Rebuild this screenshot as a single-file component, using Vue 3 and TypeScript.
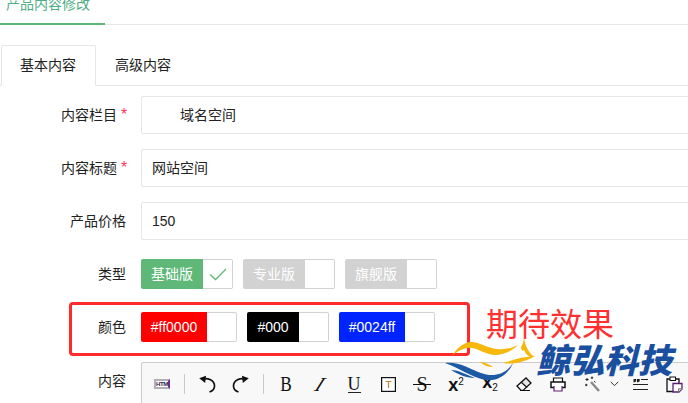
<script setup lang="ts">
interface Chip { label: string; cls?: string; style?: string; width: number; check?: boolean }
const types: Chip[] = [
  { label: '基础版', cls: 'on', width: 62, check: true },
  { label: '专业版', cls: 'off', width: 62 },
  { label: '旗舰版', cls: 'off', width: 62 },
]
const colors: Chip[] = [
  { label: '#ff0000', style: '#ff0000', width: 66 },
  { label: '#000', style: '#000000', width: 52 },
  { label: '#0024ff', style: '#0024ff', width: 66 },
]
</script>

<template>
  <div class="page">
    <nav class="topnav"><div class="toptab">产品内容修改</div></nav>

    <div class="tabs">
      <div class="tab active">基本内容</div>
      <div class="tab">高级内容</div>
    </div>

    <form class="form">
      <div class="row">
        <label class="label req">内容栏目<i class="star">*</i></label>
        <div class="input select">域名空间</div>
      </div>
      <div class="row">
        <label class="label req">内容标题<i class="star">*</i></label>
        <div class="input">网站空间</div>
      </div>
      <div class="row">
        <label class="label">产品价格</label>
        <div class="input">150</div>
      </div>
      <div class="row chips-row type-row">
        <label class="label">类型</label>
        <div class="chips">
          <div v-for="c in types" :key="c.label" class="chip">
            <span class="chip-text" :class="c.cls" :style="{ width: c.width + 'px' }">{{ c.label }}</span>
            <span class="chip-box">
              <svg v-if="c.check" width="20" height="14" viewBox="0 0 20 14"><path d="M2 7.5 L7.5 12.5 L18 2" fill="none" stroke="#5fb878" stroke-width="1.3"/></svg>
            </span>
          </div>
        </div>
      </div>
      <div class="row chips-row color-row">
        <label class="label">颜色</label>
        <div class="chips">
          <div v-for="c in colors" :key="c.label" class="chip">
            <span class="chip-text" :style="{ width: c.width + 'px', background: c.style }">{{ c.label }}</span>
            <span class="chip-box"></span>
          </div>
        </div>
      </div>
      <div class="row editor-row">
        <label class="label content-label">内容</label>
        <div class="editor">
          <div class="tool">
            <span class="html-icon">HTML</span>
          </div>
          <span class="sep"></span>
          <div class="tool">
            <svg width="18" height="18" viewBox="0 0 18 18"><path d="M4 4 C10 2.5 16.5 5 16.5 11 C16.5 14 14.5 16 11.5 17" fill="none" stroke="#111" stroke-width="1.7"/><path d="M1.2 3.2 L8 0.8 L7.2 8 Z" fill="#111"/></svg>
          </div>
          <div class="tool">
            <svg width="18" height="18" viewBox="0 0 18 18"><path d="M14 4 C8 2.5 1.5 5 1.5 11 C1.5 14 3.5 16 6.5 17" fill="none" stroke="#111" stroke-width="1.7"/><path d="M16.8 3.2 L10 0.8 L10.8 8 Z" fill="#111"/></svg>
          </div>
          <span class="sep"></span>
          <div class="tool"><span class="glyph bold">B</span></div>
          <div class="tool"><span class="glyph ital">I</span></div>
          <div class="tool"><span class="glyph under">U</span></div>
          <div class="tool">
            <svg width="15" height="15" viewBox="0 0 15 15"><rect x="0.6" y="0.6" width="13.8" height="13.8" fill="#fff" stroke="#111" stroke-width="1.2"/><path d="M4.5 4.5 H10.5 M7.5 4.5 V11" fill="none" stroke="#c08a3a" stroke-width="1.2"/></svg>
          </div>
          <div class="tool"><span class="glyph strike">S</span></div>
          <div class="tool"><span class="script sup-script">x<sup>2</sup></span></div>
          <div class="tool"><span class="script sub-script">x<sub>2</sub></span></div>
          <div class="tool">
            <svg width="16" height="15" viewBox="0 0 16 15"><path d="M5 5 L10 1 L15 6 L11 10.5 Z" fill="#e4e4e4"/><path d="M1 9 L10 1 L15 6 L7 13.4 H5 Z" fill="none" stroke="#111" stroke-width="1.3"/><path d="M5 5 L11 10.5" stroke="#111" stroke-width="1.1"/><path d="M4 13.5 H14" stroke="#111" stroke-width="1"/></svg>
          </div>
          <div class="tool">
            <svg width="16" height="15" viewBox="0 0 16 15"><path d="M3.5 5 V1 H12.5 V5" fill="#fff" stroke="#111" stroke-width="1.2"/><path d="M4 10.5 H1 V5 H15 V10.5 H12" fill="#fff" stroke="#111" stroke-width="1.5"/><path d="M4 9 V14 H12 V9" fill="#fff" stroke="#61207a" stroke-width="1.2"/></svg>
          </div>
          <div class="tool">
            <svg width="16" height="16" viewBox="0 0 16 16"><path d="M7 6 L15 15" stroke="#888" stroke-width="2.4"/><path d="M3 2 V5 M1.5 3.5 H4.5 M8 0.5 V3 M6.8 1.8 H9.2 M1 9 H3.5 M2.2 7.8 V10.2 M10 5 L11.5 6.5" stroke="#222" stroke-width="1"/></svg>
          </div>
          <div class="caret">
            <svg width="9" height="6" viewBox="0 0 9 6"><path d="M0.7 0.8 L4.5 4.6 L8.3 0.8" fill="none" stroke="#333" stroke-width="1"/></svg>
          </div>
          <div class="tool">
            <svg width="15" height="13" viewBox="0 0 15 13"><path d="M8 1.5 H15 M0 6.5 H15 M0 11.5 H15" stroke="#222" stroke-width="1.2"/><path d="M0.5 1 H3.2 V3.2 L1.8 4.2 H0.5 Z M4 1 H6.7 V3.2 L5.3 4.2 H4 Z" fill="#222"/></svg>
          </div>
          <div class="tool">
            <svg width="17" height="17" viewBox="0 0 17 17"><path d="M4 3 H1 V15.5 H7" fill="none" stroke="#111" stroke-width="1.3"/><path d="M9.5 3 H13 V7" fill="none" stroke="#111" stroke-width="1.3"/><rect x="4" y="1" width="5.5" height="3.5" fill="#fff" stroke="#111"/><path d="M7 7.5 H16 V13 L13 16 H7 Z" fill="#fff" stroke="#5a1f77" stroke-width="1.3"/><path d="M12.5 16 V12.8 H16" fill="#ddd" stroke="#777"/></svg>
          </div>
        </div>
      </div>
    </form>

    <div class="note-box"></div>
    <div class="note-text">期待效果</div>
    <svg class="logo-wave" width="92" height="48" viewBox="0 0 92 48">
      <path d="M7 21 C12 13 18 8 25 7 C33 6 42 13 52 14 C60 15 67 13 73 10 C68 15 60 20 50 20 C42 20 34 14 27 13 C20 12 13 16 7 21 Z" fill="#f7b80e"/>
      <path d="M79 0 C79 6 81 15 89 22 C85 23 81 20 79 15 C77 17 76 14 76 12 C78 9 79 5 79 0 Z" fill="#f7b80e"/>
      <path d="M58 28 C66 26 74 22 90 21 C80 27 68 30 58 28 Z M35 27 C39 27 44 29 48 32 C43 32 38 30 35 27 Z" fill="#f7b80e"/>
      <path d="M0 28 C12 26 24 33 36 38 C46 42 60 41 68 28 C63 40 52 47 40 45 C26 42 14 33 0 28 Z" fill="#1c5aa6"/>
      <path d="M6 35 C14 35 22 40 30 43 C20 43 13 39 6 35 Z" fill="#1c5aa6"/>
    </svg>
    <div class="logo-text">鲸弘科技</div>
  </div>
</template>

<style>
html, body { margin: 0; padding: 0; background: #fff; }
</style>

<style scoped>
.page {
  position: relative;
  width: 688px;
  height: 403px;
  overflow: hidden;
  background: #fff;
  color: #222;
  font-family: "Liberation Sans", "Noto Sans CJK SC", sans-serif;
  font-size: 14px;
}
.topnav {
  height: 25px;
  box-sizing: border-box;
  border-bottom: 1px solid #e6e6e6;
}
.toptab {
  width: 105px;
  height: 25px;
  box-sizing: border-box;
  padding-left: 6px;
  border-bottom: 2px solid #5fb878;
  color: #4fae84;
  line-height: 8px;
  overflow: hidden;
}
.tabs {
  display: flex;
  margin-top: 20px;
  height: 41px;
  box-sizing: border-box;
  border-bottom: 1px solid #e6e6e6;
  padding-left: 1px;
}
.tab {
  height: 40px;
  line-height: 40px;
  padding: 0 19px;
  box-sizing: border-box;
}
.tab.active {
  width: 95px;
  height: 41px;
  border: 1px solid #e6e6e6;
  border-bottom-color: #fff;
  border-radius: 2px 2px 0 0;
  line-height: 38px;
  padding: 0 18px;
}
.form { padding-top: 10px; }
.row {
  display: flex;
  align-items: center;
  margin-bottom: 15px;
}
.label {
  position: relative;
  width: 126px;
  margin-right: 1px;
  box-sizing: border-box;
  flex: none;
  text-align: right;
  line-height: 20px;
}
.label.req { padding-right: 9px; }
.star {
  position: absolute;
  left: 121px;
  top: 0;
  font-style: normal;
  color: #ff3b5c;
  font-size: 16px;
}
.input {
  width: 560px;
  height: 38px;
  box-sizing: border-box;
  flex: none;
  margin-left: 14px;
  border: 1px solid #e6e6e6;
  border-radius: 2px;
  padding-left: 10px;
  line-height: 36px;
}
.select { padding-left: 38px; }
.chips { display: flex; gap: 10px; margin-left: 14px; }
.chip { display: flex; height: 30px; }
.chips-row { height: 30px; margin-bottom: 0; }
.type-row { margin-top: 19px; }
.color-row { margin-top: 23px; }
.chip-text {
  height: 30px;
  line-height: 30px;
  text-align: center;
  color: #fff;
  border-radius: 2px 0 0 2px;
}
.chip-text.on { background: #5fb878; }
.chip-text.off { background: #d2d2d2; }
.chip-box {
  width: 30px;
  height: 30px;
  box-sizing: border-box;
  border: 1px solid #d2d2d2;
  border-left: none;
  border-radius: 0 2px 2px 0;
  display: flex;
  align-items: center;
  justify-content: center;
}
.editor-row { margin-top: 20px; align-items: flex-start; }
.content-label { margin-top: 9px; }
.editor {
  width: 560px;
  height: 50px;
  flex: none;
  box-sizing: border-box;
  margin-left: 14px;
  padding: 11px 0 0 3px;
  border: 1px solid #ccc;
  border-radius: 2px;
  background: #f8f8f8;
  display: flex;
  align-items: flex-start;
}
.tool {
  width: 34px;
  height: 20px;
  flex: none;
  display: flex;
  align-items: center;
  justify-content: center;
  color: #111;
}
.sep {
  width: 1px;
  height: 20px;
  flex: none;
  margin: 0 5px;
  background: #c8c8c8;
}
.caret {
  width: 14px;
  height: 20px;
  flex: none;
  display: flex;
  align-items: center;
  padding-left: 1px;
  box-sizing: border-box;
}
.html-icon {
  width: 16px;
  height: 10px;
  box-sizing: border-box;
  border: 2px solid #b3adb8;
  border-right-color: #6d2b8f;
  background: #fff;
  color: #2b1a4a;
  font: bold 6px/6px "Liberation Sans", sans-serif;
  letter-spacing: -0.4px;
  text-align: center;
  overflow: hidden;
}
.glyph { font-family: "Liberation Serif", serif; line-height: 20px; color: #111; display: block; }
.glyph.bold { font-size: 21px; transform: scaleX(0.82); }
.glyph.ital { font-size: 20px; transform: skewX(-32deg); }
.glyph.under { font-size: 18px; line-height: 15px; height: 15px; border-bottom: 1.5px solid #222; margin-top: 1px; }
.glyph.strike { position: relative; font-size: 20px; }
.glyph.strike::after {
  content: "";
  position: absolute;
  left: -3px;
  right: -3px;
  top: 10px;
  height: 1px;
  background: #111;
}
.script { font: bold 18px/20px "Liberation Sans", sans-serif; color: #111; }
.script sup, .script sub { font-size: 10px; line-height: 0; font-weight: normal; }
.script sup { vertical-align: 6px; }
.script sub { vertical-align: -3px; }
.sup-script { padding-top: 2px; }
.sub-script { margin-top: -4px; }
.note-box {
  position: absolute;
  left: 69px;
  top: 302px;
  width: 401px;
  height: 54px;
  box-sizing: border-box;
  border: 3px solid #ff2a2a;
  border-radius: 4px;
}
.note-text {
  position: absolute;
  left: 486px;
  top: 303px;
  font-size: 32px;
  line-height: 44px;
  color: #ff3030;
}
.logo-wave { position: absolute; left: 445px; top: 335px; }
.logo-text {
  position: absolute;
  left: 536px;
  top: 338px;
  font-size: 34px;
  line-height: 42px;
  font-family: "Noto Sans CJK SC", sans-serif;
  font-weight: 900;
  font-style: italic;
  color: #1a4f9f;
}
</style>
